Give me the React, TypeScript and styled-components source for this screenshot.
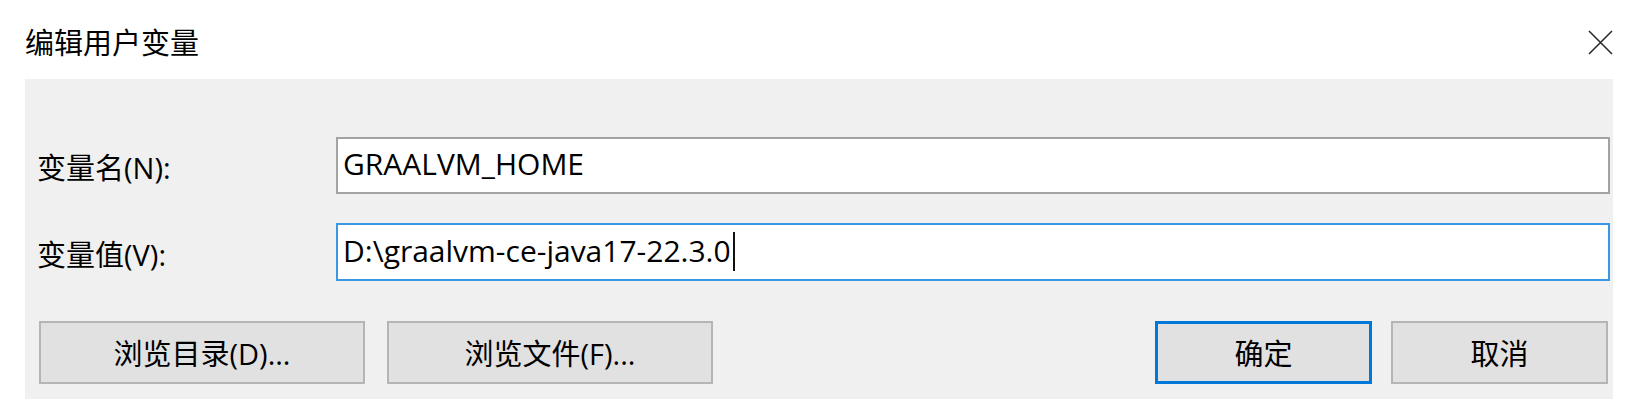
import React from "react";
import styled, { createGlobalStyle } from "styled-components";

const Global = createGlobalStyle`
  html, body { margin: 0; padding: 0; background: #ffffff; }
  body {
    font-family: "Open Sans", "Noto Sans CJK SC", sans-serif;
    color: #000;
  }
`;

const Dialog = styled.div`
  width: 1636px;
  height: 414px;
  background: #ffffff;
  display: flex;
  flex-direction: column;
`;

const Header = styled.div`
  height: 79px;
  box-sizing: border-box;
  padding: 6px 23px 0 25px;
  display: flex;
  align-items: center;
  justify-content: space-between;
`;

const Title = styled.div`
  font-size: 29px;
  line-height: 1;
  color: #000;
`;

const CloseButton = styled.div`
  width: 25px;
  height: 25px;
  display: flex;
`;

const Panel = styled.div`
  margin: 0 23px 0 25px;
  height: 320px;
  box-sizing: border-box;
  background: #f0f0f0;
  padding: 58px 3px 15px 12px;
  display: flex;
  flex-direction: column;
`;

const Form = styled.div`
  display: grid;
  grid-template-columns: 299px 1fr;
  row-gap: 29px;
  align-items: center;
`;

const Label = styled.div`
  font-size: 29px;
  line-height: 1;
  padding-top: 4px;
`;

const Field = styled.div<{ $focused?: boolean; $h: number }>`
  height: ${(p) => p.$h}px;
  box-sizing: border-box;
  background: #fff;
  border: 2px solid ${(p) => (p.$focused ? "#3b97e6" : "#a3a3a3")};
  padding: 0 0 4px 5px;
  display: flex;
  align-items: center;
  font-size: 30px;
  white-space: nowrap;
`;

const Caret = styled.span`
  display: inline-block;
  width: 2px;
  height: 39px;
  background: #111;
  margin-left: 2px;
  margin-top: 3px;
`;

const ButtonRow = styled.div`
  margin: 40px 2px 0 2px;
  display: flex;
  align-items: center;
`;

const Group = styled.div<{ $gap: number }>`
  display: flex;
  gap: ${(p) => p.$gap}px;
`;

const Spacer = styled.div`
  flex: 1;
`;

const Button = styled.div<{ $w: number; $primary?: boolean }>`
  width: ${(p) => p.$w}px;
  height: 63px;
  box-sizing: border-box;
  background: #e1e1e1;
  border: ${(p) => (p.$primary ? "3px solid #0078d7" : "2px solid #b5b5b5")};
  display: flex;
  align-items: center;
  justify-content: center;
  font-size: 29px;
  padding-bottom: 2px;
`;

export default function App() {
  return (
    <>
      <Global />
      <Dialog>
        <Header>
          <Title>编辑用户变量</Title>
          <CloseButton>
            <svg width="25" height="25" viewBox="0 0 25 25">
              <path d="M1 1 L24 24 M24 1 L1 24" stroke="#2b2b2b" strokeWidth="1.6" fill="none" />
            </svg>
          </CloseButton>
        </Header>
        <Panel>
          <Form>
            <Label>变量名(N):</Label>
            <Field $h={57}>GRAALVM_HOME</Field>
            <Label>变量值(V):</Label>
            <Field $h={58} $focused>
              D:\graalvm-ce-java17-22.3.0
              <Caret />
            </Field>
          </Form>
          <ButtonRow>
            <Group $gap={22}>
              <Button $w={326}>浏览目录(D)...</Button>
              <Button $w={326}>浏览文件(F)...</Button>
            </Group>
            <Spacer />
            <Group $gap={19}>
              <Button $w={217} $primary>确定</Button>
              <Button $w={217}>取消</Button>
            </Group>
          </ButtonRow>
        </Panel>
      </Dialog>
    </>
  );
}
